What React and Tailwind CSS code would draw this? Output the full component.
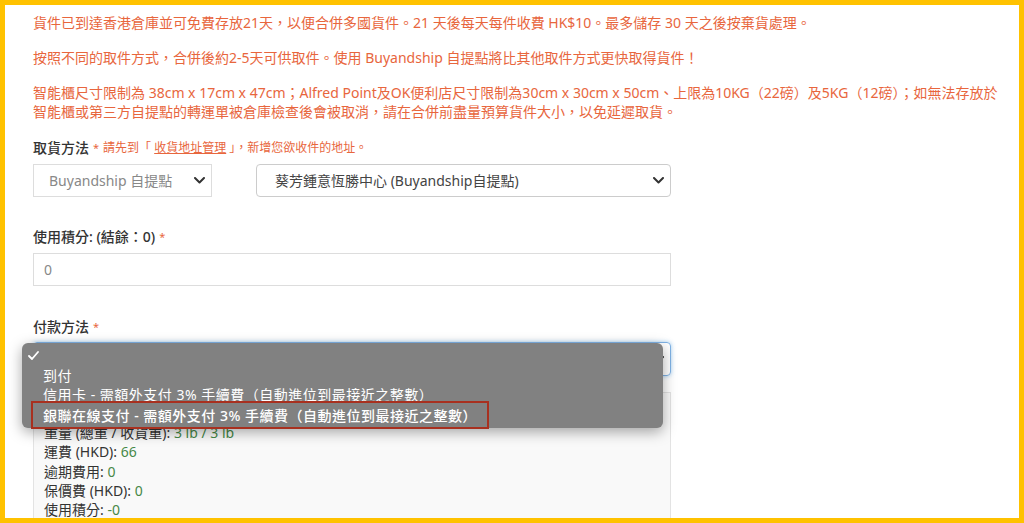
import React from "react";

// checkout form – pickup / points / payment, with the native select menu open
const Chevron = ({ color = "#333" }) => (
  <svg width="11" height="7" viewBox="0 0 11 7" fill="none">
    <path d="M1 1l4.5 4.5L10 1" stroke={color} strokeWidth="2" strokeLinecap="round" strokeLinejoin="round" />
  </svg>
);

const Star = () => <span className="text-[#e8663d] text-[11px] align-top ml-1">*</span>;

const summary = [
  ["重量 (總重 / 收貨重)", "3 lb / 3 lb"],
  ["運費 (HKD)", "66"],
  ["逾期費用", "0"],
  ["保價費 (HKD)", "0"],
  ["使用積分", "-0"],
];

export default function App() {
  return (
    <div className="h-[523px] bg-[#ffc200] p-[5px] font-['Noto_Sans','Noto_Sans_CJK_TC',sans-serif]">
      <div className="h-full bg-white overflow-hidden pl-[28px] pt-[8px] text-[14px] text-[#333]">
        {/* notices */}
        <div className="text-[#e8663d] leading-[19px] w-[980px]">
          <p>貨件已到達香港倉庫並可免費存放21天，以便合併多國貨件。21 天後每天每件收費 HK$10。最多儲存 30 天之後按棄貨處理。</p>
          <p className="mt-[16px]">按照不同的取件方式，合併後約2-5天可供取件。使用 Buyandship 自提點將比其他取件方式更快取得貨件！</p>
          <p className="mt-[16px]">
            <span className="block whitespace-nowrap">智能櫃尺寸限制為 38cm x 17cm x 47cm；Alfred Point及OK便利店尺寸限制為30cm x 30cm x 50cm、上限為10KG（22磅）及5KG（12磅）；如無法存放於</span>
            <span className="block whitespace-nowrap">智能櫃或第三方自提點的轉運單被倉庫檢查後會被取消，請在合併前盡量預算貨件大小，以免延遲取貨。</span>
          </p>
        </div>

        {/* pickup method */}
        <div className="mt-[17px] leading-[20px] flex items-center">
          <span className="font-medium text-[#333]">取貨方法</span>
          <Star />
          <span className="text-[#e8663d] text-[12px] ml-1">
            請先到「 <span className="underline">收貨地址管理</span> 」，新增您欲收件的地址。
          </span>
        </div>
        <div className="mt-[6px] flex gap-[44px]">
          <div className="w-[179px] h-[33px] border border-[#ddd] flex items-center justify-between pl-[15px] pr-[6px] text-[#888]">
            <span>Buyandship 自提點</span>
            <Chevron />
          </div>
          <div className="w-[415px] h-[33px] border border-[#ccc] rounded-[4px] flex items-center justify-between pl-[18px] pr-[6px] text-[#444]">
            <span>葵芳鍾意恆勝中心 (Buyandship自提點)</span>
            <Chevron />
          </div>
        </div>

        {/* points */}
        <div className="mt-[30px] leading-[20px] flex items-center">
          <span className="font-medium">使用積分: (結餘：0)</span>
          <Star />
        </div>
        <div className="mt-[6px] w-[638px] h-[33px] border border-[#ddd] flex items-center pl-[10px] text-[#888]">0</div>

        {/* payment */}
        <div className="mt-[31px] leading-[20px] flex items-center">
          <span className="font-medium">付款方法</span>
          <Star />
        </div>
        <div className="relative mt-[5px] w-[638px]">
          <div className="h-[34px] border border-[#7fb2e5] rounded-[4px] shadow-[0_0_4px_rgba(102,175,233,0.6)] flex items-center justify-end pr-[6px]">
            <Chevron />
          </div>

          {/* open native menu */}
          <div className="absolute z-20 left-[-11px] top-[1px] w-[641px] h-[85px] bg-[#818181] rounded-[6px] shadow-[0_4px_14px_rgba(0,0,0,0.35)] text-white pt-[2px] tracking-[0.5px]">
            <div className="h-[20px] flex items-center pl-[6px]">
              <svg width="11" height="9" viewBox="0 0 11 9" fill="none">
                <path d="M1 5l3 3 6-7" stroke="#fff" strokeWidth="1.8" strokeLinecap="round" strokeLinejoin="round" />
              </svg>
            </div>
            <div className="h-[21px] leading-[21px] pl-[21px]">到付</div>
            <div className="h-[15px] pl-[21px] whitespace-nowrap overflow-hidden">
              <div className="leading-[18px]">信用卡 - 需額外支付 3% 手續費（自動進位到最接近之整數）</div>
            </div>
            <div className="relative ml-[9px] w-[458px] h-[28px] border-2 border-[#a8301f] bg-[#818181] flex items-center pl-[10px] whitespace-nowrap font-medium">
              銀聯在線支付 - 需額外支付 3% 手續費（自動進位到最接近之整數）
            </div>
          </div>
        </div>

        {/* order summary (top rows sit under the open menu) */}
        <div className="mt-[16px] w-[638px] h-[200px] bg-[#f9f9f9] border border-[#e3e3e3] pt-[30px] pl-[10px] leading-[19.3px]">
          {summary.map(([k, v]) => (
            <div key={k}>
              {k}: <span className="text-[#468847]">{v}</span>
            </div>
          ))}
        </div>
      </div>
    </div>
  );
}
